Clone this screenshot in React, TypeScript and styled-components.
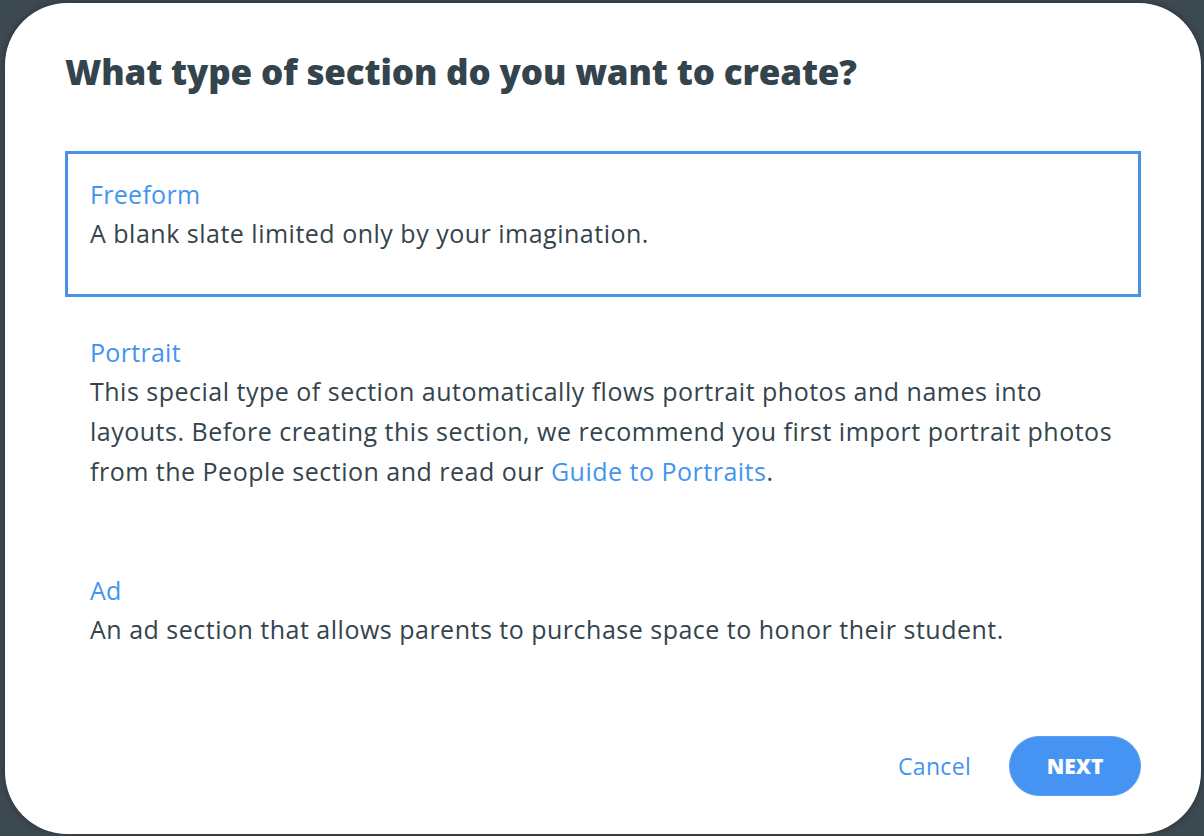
import styled, { createGlobalStyle } from 'styled-components';

const GlobalStyle = createGlobalStyle`
  html, body {
    margin: 0;
    padding: 0;
    background: #3c4951;
    font-family: "Open Sans", Lato, sans-serif;
  }
`;

const Backdrop = styled.div`
  width: 1204px;
  height: 836px;
  padding: 3px 3px 2px 5px;
  box-sizing: border-box;
  background: #3c4951;
  overflow: hidden;
`;

const Modal = styled.div`
  height: 100%;
  background: #ffffff;
  border-radius: 62px;
  box-shadow: 0 0 6px rgba(0, 0, 0, 0.35);
  padding: 45px 60px 38px 60px;
  box-sizing: border-box;
  display: flex;
  flex-direction: column;
`;

const Heading = styled.h1`
  margin: 0;
  font-size: 35px;
  font-weight: 800;
  color: #33444c;
  letter-spacing: -0.15px;
  line-height: 48px;
`;

const Options = styled.div`
  margin-top: 55px;
  display: flex;
  flex-direction: column;
  gap: 12px;
`;

const Option = styled.div<{ $selected?: boolean; $tall?: boolean }>`
  border: 3px solid ${p => (p.$selected ? '#4a90e8' : 'transparent')};
  padding: 25px 22px 0 22px;
  min-height: ${p => (p.$tall ? '226px' : '146px')};
  box-sizing: border-box;
  cursor: pointer;
`;

const OptionTitle = styled.div`
  font-size: 25px;
  line-height: 30px;
  letter-spacing: 0.3px;
  color: #4394f0;
`;

const OptionBody = styled.p`
  margin: 4px 0 0;
  font-size: 25px;
  line-height: 40px;
  letter-spacing: 0.5px;
  color: #34444c;
`;

const GuideLink = styled.a`
  color: #4394f0;
  text-decoration: none;
`;

const Footer = styled.div`
  margin-top: auto;
  display: flex;
  justify-content: flex-end;
  align-items: center;
  gap: 38px;
`;

const CancelButton = styled.button`
  background: none;
  border: none;
  padding: 0;
  font-family: inherit;
  font-size: 23px;
  letter-spacing: 0.3px;
  color: #4394f0;
  cursor: pointer;
`;

const NextButton = styled.button`
  width: 132px;
  height: 60px;
  border-radius: 30px;
  border: 1px solid #5aa0f0;
  background: #4594f4;
  color: #ffffff;
  font-family: inherit;
  font-size: 21px;
  font-weight: 800;
  cursor: pointer;
`;

const sections = [
  {
    id: 'freeform',
    title: 'Freeform',
    body: <>A blank slate limited only by your imagination.</>,
  },
  {
    id: 'portrait',
    title: 'Portrait',
    body: (
      <>
        This special type of section automatically flows portrait photos and names into layouts. Before
        creating this section, we recommend you first import portrait photos from the People section and
        read our <GuideLink href="#">Guide to Portraits</GuideLink>.
      </>
    ),
  },
  {
    id: 'ad',
    title: 'Ad',
    body: <>An ad section that allows parents to purchase space to honor their student.</>,
  },
];

export default function App() {
  return (
    <>
      <GlobalStyle />
      <Backdrop>
        <Modal>
          <Heading>What type of section do you want to create?</Heading>
          <Options>
            {sections.map((s, i) => (
              <Option key={s.id} $selected={i === 0} $tall={s.id === 'portrait'}>
                <OptionTitle>{s.title}</OptionTitle>
                <OptionBody>{s.body}</OptionBody>
              </Option>
            ))}
          </Options>
          <Footer>
            <CancelButton>Cancel</CancelButton>
            <NextButton>NEXT</NextButton>
          </Footer>
        </Modal>
      </Backdrop>
    </>
  );
}
